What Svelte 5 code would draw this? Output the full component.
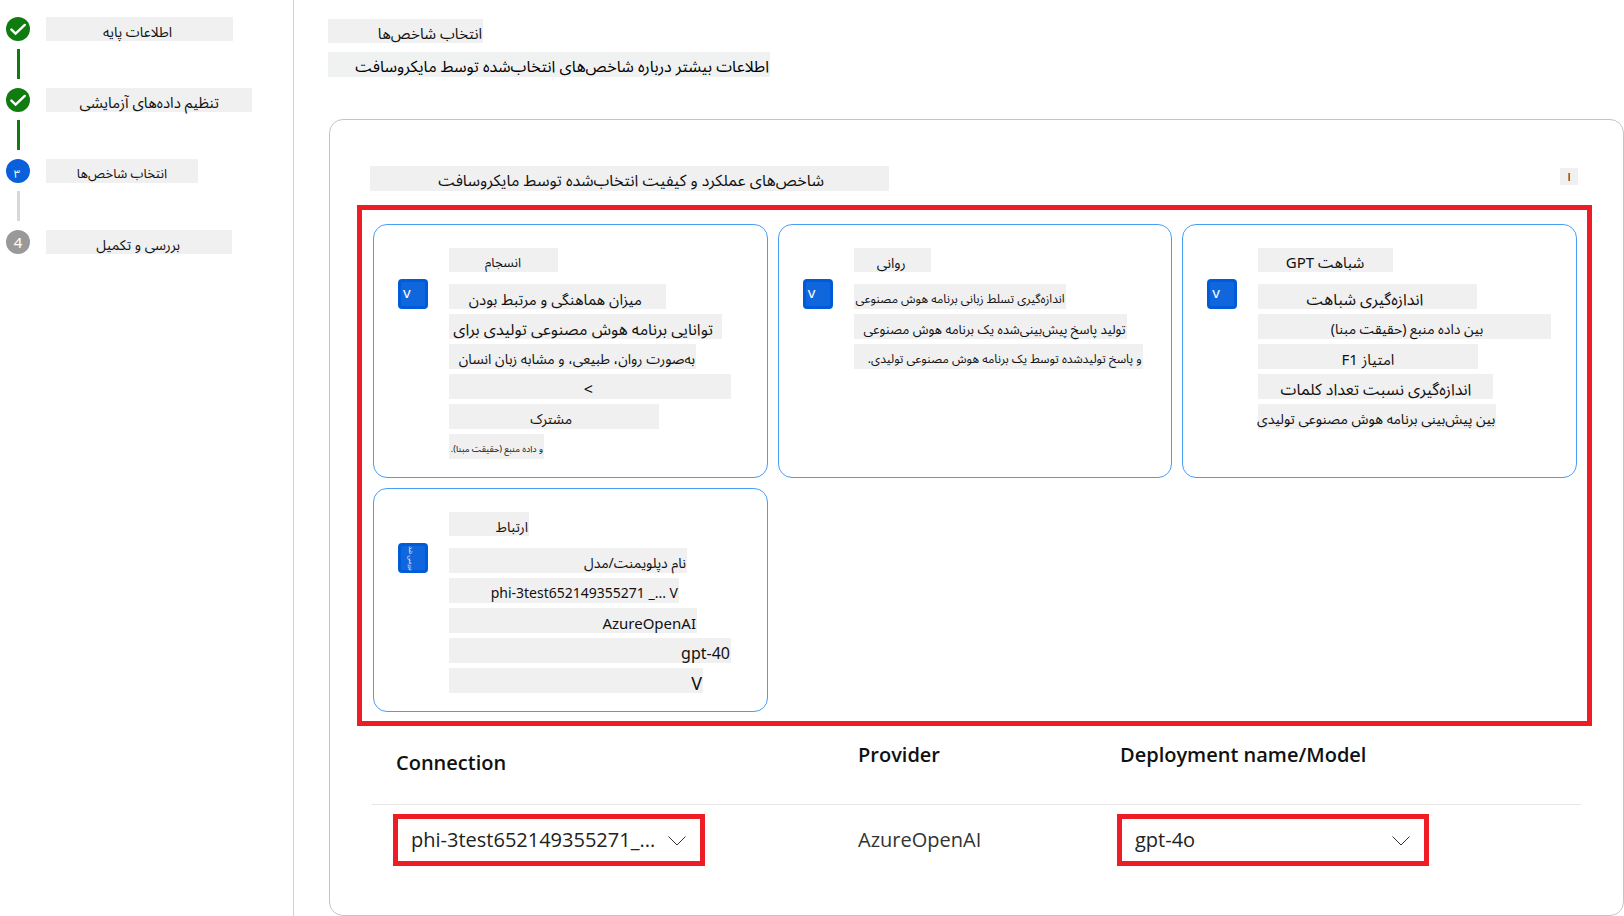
<script>
  const steps = [
    { label: 'اطلاعات پایه', state: 'done', w: 187, r: 61, size: 14 },
    { label: 'تنظیم داده‌های آزمایشی', state: 'done', w: 206, r: 33, size: 15 },
    { label: 'انتخاب شاخص‌ها', state: 'current', mark: '۳', w: 152, r: 31, size: 13 },
    { label: 'بررسی و تکمیل', state: 'todo', mark: '4', w: 186, r: 52, size: 14 },
  ];
  const cards = [
    {
      mark: 'v', w: 109, r: 37, size: 13, title: 'انسجام',
      lines: [
        { t: 'میزان هماهنگی و مرتبط بودن', w: 217, r: 24, size: 15 },
        { t: 'توانایی برنامه هوش مصنوعی تولیدی برای', w: 273, r: 9, size: 16 },
        { t: 'به‌صورت روان، طبیعی، و مشابه زبان انسان', w: 247, r: 1, size: 14 },
        { t: '>', w: 282, r: 138, size: 16 },
        { t: 'مشترک', w: 210, r: 87, size: 14 },
        { t: 'و داده منبع (حقیقت مبنا).', w: 95, r: 1, size: 9 },
      ],
    },
    {
      mark: 'v', w: 77, r: 25, size: 14, title: 'روانی',
      lines: [
        { t: 'اندازه‌گیری تسلط زبانی برنامه هوش مصنوعی', w: 212, r: 1, size: 12 },
        { t: 'تولید پاسخ پیش‌بینی‌شده یک برنامه هوش مصنوعی', w: 273, r: 1, size: 13 },
        { t: 'و پاسخ تولیدشده توسط یک برنامه هوش مصنوعی تولیدی.', w: 289, r: 1, size: 12 },
      ],
    },
    {
      mark: 'v', w: 135, r: 29, size: 15, title: 'شباهت GPT',
      lines: [
        { t: 'اندازه‌گیری شباهت', w: 219, r: 54, size: 16 },
        { t: 'بین داده منبع (حقیقت مبنا)', w: 293, r: 68, size: 14 },
        { t: 'امتیاز F1', w: 220, r: 84, size: 15 },
        { t: 'اندازه‌گیری نسبت تعداد کلمات', w: 235, r: 22, size: 16 },
        { t: 'بین پیش‌بینی برنامه هوش مصنوعی تولیدی', w: 238, r: 1, size: 14 },
      ],
    },
    {
      mark: '', w: 80, r: 1, size: 14, title: 'ارتباط',
      lines: [
        { t: 'نام دپلویمنت/مدل', w: 238, r: 1, size: 14 },
        { t: 'phi-3test652149355271 _... V', w: 230, r: 1, size: 14, ltr: true },
        { t: 'AzureOpenAI', w: 248, r: 1, size: 15, ltr: true },
        { t: 'gpt-40', w: 282, r: 1, size: 16, ltr: true },
        { t: 'V', w: 254, r: 1, size: 18, ltr: true },
      ],
    },
  ];
</script>

{#snippet chip(t, w, r, size, ltr = false)}
  <span class="chip" dir={ltr ? 'ltr' : 'rtl'} style="width:{w}px; padding-right:{r}px; font-size:{size}px">{t}</span>
{/snippet}

{#snippet chevron()}
  <svg viewBox="0 0 18 10" width="18" height="10"><path d="M.5.5L9 9 17.5.5" fill="none" stroke="#333" /></svg>
{/snippet}

<div class="page">
  <nav class="side">
    <ol>
      {#each steps as s}
        <li>
          <span class="dot {s.state}">
            {#if s.state === 'done'}
              <svg viewBox="0 0 24 24" width="24" height="24"><path d="M5.4 12.6l4.2 4.1 9.2-8.8" fill="none" stroke="#fff" stroke-width="2.4" stroke-linecap="round" stroke-linejoin="miter" /></svg>
            {:else}{s.mark}{/if}
          </span>
          {@render chip(s.label, s.w, s.r, s.size)}
        </li>
      {/each}
    </ol>
  </nav>

  <main>
    <h1>{@render chip('انتخاب شاخص‌ها', 155, 1, 15)}</h1>
    <p class="more"><a href="#metrics">{@render chip('اطلاعات بیشتر درباره شاخص‌های انتخاب‌شده توسط مایکروسافت', 442, 1, 16)}</a></p>

    <section class="panel" id="metrics">
      <div class="bar">
        <h2>{@render chip('شاخص‌های عملکرد و کیفیت انتخاب‌شده توسط مایکروسافت', 519, 65, 16)}</h2>
        <button class="info">ا</button>
      </div>

      <div class="cards">
        {#each cards as c, i}
          <article class="card">
            <span class="check">
              <input id="m{i}" type="checkbox" checked />
              {#if c.mark}<span class="mark">{c.mark}</span>{:else}<span class="mark turned">بررسی شد</span>{/if}
            </span>
            <div class="body">
              <label for="m{i}">{@render chip(c.title, c.w, c.r, c.size)}</label>
              {#each c.lines as l}
                {@render chip(l.t, l.w, l.r, l.size, l.ltr)}
              {/each}
            </div>
          </article>
        {/each}
      </div>

      <table>
        <thead>
          <tr>
            <th class="c1" scope="col">Connection</th>
            <th class="c2" scope="col">Provider</th>
            <th class="c3" scope="col">Deployment name/Model</th>
          </tr>
        </thead>
        <tbody>
          <tr>
            <td class="c1">
              <span class="pick">
                <select aria-label="Connection"><option>phi-3test652149355271_...</option></select>
                {@render chevron()}
              </span>
            </td>
            <td class="c2">AzureOpenAI</td>
            <td class="c3">
              <span class="pick">
                <select aria-label="Deployment name/Model"><option>gpt-4o</option></select>
                {@render chevron()}
              </span>
            </td>
          </tr>
        </tbody>
      </table>
    </section>
  </main>
</div>

<style>
  :global(body) { margin: 0; background: #fff; }
  * { box-sizing: border-box; }
  .page {
    display: flex;
    min-height: 100vh;
    color: #111;
    font-family: "Noto Sans", "Noto Sans Arabic", "DejaVu Sans", sans-serif;
  }
  .side { flex: 0 0 294px; border-right: 1px solid #d1d1d1; }
  ol { list-style: none; margin: 0; padding: 17px 0 0 6px; display: flex; flex-direction: column; gap: 47px; }
  li { position: relative; height: 24px; display: flex; align-items: center; gap: 16px; }
  li:not(:last-child)::after {
    content: ""; position: absolute; left: 11px; top: 32px; width: 3px; height: 30px; background: #107c10;
  }
  li:nth-child(3)::after { background: #d8d8d8; }
  .dot {
    flex: none; width: 24px; height: 24px; border-radius: 50%;
    display: grid; place-items: center; color: #fff; font-size: 15px; line-height: 24px;
  }
  .dot.done { background: #107c10; }
  .dot.current { background: #0a5fdb; font-size: 11px; padding: 5px 2px 0 0; line-height: 19px; }
  .dot.todo { background: #999; }
  .chip {
    display: block; height: 24px; line-height: 29px; background: #f0f0f0;
    white-space: nowrap; text-align: right;
  }
  main { flex: 1; min-width: 0; padding: 19px 0 0 34px; display: flex; flex-direction: column; }
  h1, h2, p { margin: 0; font-weight: 400; }
  a { color: inherit; text-decoration: none; }
  .more { margin-top: 9px; }
  .more .chip { background: #f0f2f2; color: #000; }
  .panel {
    flex: 1; margin: 42px 0 0 1px; padding: 46px 31px 20px 27px;
    border: 1px solid #c4c4c4; border-radius: 14px;
  }
  .bar { display: flex; justify-content: space-between; padding: 0 14px 0 13px; margin-bottom: 14px; }
  .bar .chip, .body > .chip, .more .chip { height: 25px; }
  .body > .chip { line-height: 30px; }
  .info {
    width: 18px; height: 17px; margin-top: 2px; padding: 0; border: 0;
    background: #f0f0f0; color: #111; font: 11px/17px "Noto Sans", "DejaVu Sans", sans-serif;
  }
  .cards {
    display: grid; grid-template-columns: repeat(3, 1fr); gap: 10px;
    padding: 14px 10px 9px 11px; border: 5px solid #ee1c25;
  }
  .card { display: flex; gap: 21px; padding: 23px 24px 18px; border: 1px solid #479ef5; border-radius: 14px; }
  .check { flex: none; position: relative; width: 30px; height: 30px; margin-top: 31px; }
  .check input {
    appearance: none; display: block; width: 30px; height: 30px; margin: 0;
    border: 3px solid #005bd8; border-radius: 4px; background: #1066dc;
  }
  .mark { position: absolute; left: 5px; top: 3px; color: #fff; font-size: 15px; line-height: 20px; pointer-events: none; }
  .turned { left: 8px; top: 3px; font-size: 6px; line-height: 10px; writing-mode: vertical-rl; white-space: nowrap; }
  .body { display: flex; flex-direction: column; gap: 5px; min-width: 0; }
  .body label { margin-bottom: 7px; }
  table { width: calc(100% - 26px); margin: 0 0 0 15px; border-collapse: collapse; table-layout: fixed; font: 20px/28px "Open Sans", "Noto Sans", sans-serif; }
  th, td { padding: 0; text-align: left; font-weight: 400; }
  th { font-weight: 600; vertical-align: top; height: 78px; padding-top: 15px; border-bottom: 1px solid #e6e6e6; }
  td { padding-top: 9px; vertical-align: top; color: #333; }
  .c1 { width: 486px; }
  .c2 { width: 259px; }
  th.c1 { padding: 23px 0 0 24px; }
  td.c1 { padding-left: 21px; }
  td.c2 { padding-top: 21px; }
  th.c3 { padding-left: 3px; }
  .pick { position: relative; display: block; width: 312px; }
  select {
    appearance: none; display: block; width: 100%; height: 52px; padding: 0 45px 0 13px;
    border: 5px solid #ee1c25; border-radius: 0; background: #fff; color: #222; font: inherit;
  }
  .pick svg { position: absolute; right: 19px; top: 22px; pointer-events: none; }
</style>
